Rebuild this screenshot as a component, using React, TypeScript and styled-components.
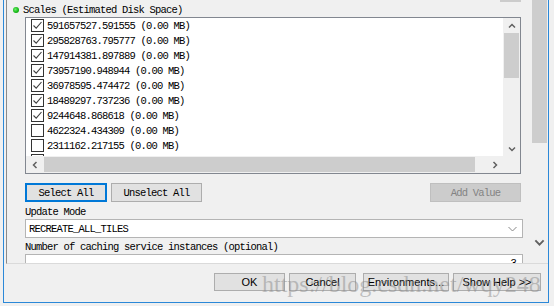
import styled, { createGlobalStyle } from "styled-components";

const mono = `"Liberation Mono", "DejaVu Sans Mono", monospace`;
const sans = `"Liberation Sans", Arial, sans-serif`;

const scales = [
    { value: "591657527.591555", checked: true },
    { value: "295828763.795777", checked: true },
    { value: "147914381.897889", checked: true },
    { value: "73957190.948944", checked: true },
    { value: "36978595.474472", checked: true },
    { value: "18489297.737236", checked: true },
    { value: "9244648.868618", checked: true },
    { value: "4622324.434309", checked: false },
    { value: "2311162.217155", checked: false },
    { value: "1155581.108577", checked: false },
    { value: "577790.554289", checked: false },
];

const GlobalStyle = createGlobalStyle`
html, body {
    margin: 0;
    padding: 0;
    background: #f0f0f0;
}
* {
    box-sizing: border-box;
}
`;

const Page = styled.div`
background: #f0f0f0;
display: flex;
height: 306px;
overflow: hidden;
padding-left: 3px;
width: 554px;
`;

const Window = styled.div`
border-bottom: 1px solid #2b88d8;
border-left: 1px solid #2b88d8;
border-right: 1px solid #2b88d8;
display: flex;
flex-direction: column;
flex-shrink: 0;
height: 303px;
position: relative;
width: 546px;
`;

const ParamsFrame = styled.div`
border-bottom: 1px solid #dadada;
border-left: 1px solid #8a8a8a;
display: flex;
flex-shrink: 0;
height: 264px;
margin-left: 2px;
overflow: hidden;
`;

const ParamsPane = styled.div`
display: flex;
flex: 1;
flex-direction: column;
min-height: 0;
padding: 0 10px 0 18px;

& > * {
    flex-shrink: 0;
}
`;

const TopStub = styled.div`
align-self: flex-end;
background: #cccccc;
height: 2px;
width: 21px;
`;

const SectionHeader = styled.div`
align-items: center;
display: flex;
font-family: ${mono};
font-size: 10.5px;
height: 15px;
letter-spacing: -0.8px;
margin-left: -12px;
white-space: nowrap;
`;

const StatusDot = styled.span`
background: radial-gradient(circle at 40% 40%, #6af06a 0%, #13b513 60%, #0c8a0c 100%);
border-radius: 50%;
display: inline-block;
height: 6px;
margin-right: 4px;
width: 6px;
`;

const ListBox = styled.div`
background: #ffffff;
border: 1px solid #828790;
display: grid;
grid-template-columns: 1fr 17px;
grid-template-rows: 138px 17px;
height: 157px;
`;

const RowsArea = styled.div`
overflow: hidden;
`;

const ScaleRow = styled.div`
align-items: center;
display: flex;
font-family: ${mono};
font-size: 10.5px;
height: 15px;
letter-spacing: -0.8px;
padding-left: 5px;
white-space: nowrap;
`;

const CheckBox = styled.span`
align-items: center;
background: #ffffff;
border: 1px solid #333333;
display: inline-flex;
flex-shrink: 0;
height: 13px;
justify-content: center;
margin-right: 3px;
width: 13px;
`;

const VScroll = styled.div`
background: #f0f0f0;
display: flex;
flex-direction: column;
`;

const HScroll = styled.div`
background: #f0f0f0;
display: flex;
`;

const Corner = styled.div`
background: #f0f0f0;
`;

const ArrowCell = styled.div<{ $long?: boolean }>`
align-items: center;
display: flex;
flex-shrink: 0;
height: ${(p) => (p.$long ? "17px" : "15px")};
justify-content: center;
width: 17px;
`;

const Thumb = styled.div<{ $size: number; $horizontal?: boolean }>`
background: #cdcdcd;
flex-shrink: 0;
${(p) =>
    p.$horizontal
        ? `width: ${p.$size}px; margin: 1px 0 1px 1px;`
        : `height: ${p.$size}px; margin: 0 1px;`}
`;

const Track = styled.div`
flex: 1;
`;

const ButtonRow = styled.div`
display: flex;
justify-content: space-between;
margin-top: 9px;
`;

const ButtonGroup = styled.div`
display: flex;
gap: 4px;
`;

const DlgButton = styled.button<{ $width: number; $focused?: boolean }>`
background: ${(p) => (p.disabled ? "#cccccc" : "#e1e1e1")};
border: 1px solid ${(p) => (p.$focused ? "#0078d7" : p.disabled ? "#bfbfbf" : "#adadad")};
box-shadow: ${(p) => (p.$focused ? "inset 0 0 0 1px #0078d7" : "none")};
color: ${(p) => (p.disabled ? "#838383" : "#000000")};
font-family: ${mono};
font-size: 10.5px;
height: 19px;
letter-spacing: -0.8px;
padding: 0;
width: ${(p) => p.$width}px;
`;

const FieldLabel = styled.div<{ $gap: number }>`
font-family: ${mono};
font-size: 10.5px;
height: 14px;
letter-spacing: -0.8px;
line-height: 14px;
margin-top: ${(p) => p.$gap}px;
white-space: nowrap;
`;

const ComboBox = styled.div`
align-items: center;
background: #ffffff;
border: 1px solid #b4b4b4;
display: flex;
font-family: ${mono};
font-size: 10.5px;
height: 19px;
justify-content: space-between;
letter-spacing: -0.8px;
margin-right: -2px;
padding: 0 5px 0 3px;
`;

const TextBox = styled.div`
background: #ffffff;
border: 1px solid #b4b4b4;
font-family: ${mono};
font-size: 10.5px;
height: 19px;
letter-spacing: -0.8px;
line-height: 17px;
margin-right: -2px;
padding-right: 6px;
text-align: right;
`;

const OuterScroll = styled.div`
display: flex;
flex-direction: column;
flex-shrink: 0;
width: 17px;
`;

const OuterThumb = styled.div`
background: #cdcdcd;
height: 143px;
margin: 0 1px;
`;

const OuterArrow = styled.div`
align-items: center;
display: flex;
height: 17px;
justify-content: center;
margin-bottom: 12px;
`;

const ButtonBar = styled.div`
display: flex;
flex: 1;
gap: 4px;
justify-content: flex-end;
padding: 9px 7px 0 0;
`;

const BarButton = styled.button<{ $width: number; $space?: number }>`
background: #e1e1e1;
border: 1px solid #adadad;
color: #000000;
font-family: ${sans};
font-size: 11px;
height: 18px;
margin-left: ${(p) => p.$space ?? 0}px;
padding: 0;
width: ${(p) => p.$width}px;
`;

const Watermark = styled.div`
color: rgba(140, 140, 140, 0.5);
font-family: "Liberation Serif", "Times New Roman", serif;
font-size: 24px;
left: 258px;
line-height: 24px;
pointer-events: none;
position: absolute;
top: 272px;
white-space: nowrap;
`;

const Chevron = ({ dir, bold }: { dir: "up" | "down" | "left" | "right"; bold?: boolean }) => {
    const rot = { up: 0, right: 90, down: 180, left: 270 }[dir];
    const w = bold ? 11 : 8;
    return (
        <svg width={w} height={w} viewBox="0 0 8 8">
            <path
                d="M1 5.5 L4 2.5 L7 5.5"
                fill="none"
                stroke="#606060"
                strokeWidth={bold ? 1.4 : 1.5}
                transform={`rotate(${rot} 4 4)`}
            />
        </svg>
    );
};

const CheckMark = () => (
    <svg width="11" height="11" viewBox="0 0 11 11">
        <path d="M1.5 5.5 L4.2 8.2 L9.5 2" fill="none" stroke="#404040" strokeWidth="1.1" />
    </svg>
);

const App = () => {
    return (
        <Page>
            <GlobalStyle />
            <Window>
                <ParamsFrame>
                    <ParamsPane>
                        <TopStub />
                        <SectionHeader>
                            <StatusDot />
                            Scales (Estimated Disk Space)
                        </SectionHeader>
                        <ListBox>
                            <RowsArea>
                                {scales.map((s) => (
                                    <ScaleRow key={s.value}>
                                        <CheckBox>{s.checked && <CheckMark />}</CheckBox>
                                        {s.value} (0.00 MB)
                                    </ScaleRow>
                                ))}
                            </RowsArea>
                            <VScroll>
                                <ArrowCell>
                                    <Chevron dir="up" />
                                </ArrowCell>
                                <Thumb $size={45} />
                                <Track />
                                <ArrowCell>
                                    <Chevron dir="down" />
                                </ArrowCell>
                            </VScroll>
                            <HScroll>
                                <ArrowCell $long>
                                    <Chevron dir="left" />
                                </ArrowCell>
                                <Thumb $size={431} $horizontal />
                                <Track />
                                <ArrowCell $long>
                                    <Chevron dir="right" />
                                </ArrowCell>
                            </HScroll>
                            <Corner />
                        </ListBox>
                        <ButtonRow>
                            <ButtonGroup>
                                <DlgButton $width={82} $focused>Select All</DlgButton>
                                <DlgButton $width={91}>Unselect All</DlgButton>
                            </ButtonGroup>
                            <DlgButton $width={91} disabled>Add Value</DlgButton>
                        </ButtonRow>
                        <FieldLabel $gap={3}>Update Mode</FieldLabel>
                        <ComboBox>
                            RECREATE_ALL_TILES
                            <svg width="9" height="6" viewBox="0 0 9 6">
                                <path d="M0.5 1 L4.5 5 L8.5 1" fill="none" stroke="#888888" strokeWidth="1" />
                            </svg>
                        </ComboBox>
                        <FieldLabel $gap={2}>Number of caching service instances (optional)</FieldLabel>
                        <TextBox>3</TextBox>
                    </ParamsPane>
                    <OuterScroll>
                        <OuterThumb />
                        <Track />
                        <OuterArrow>
                            <Chevron dir="down" bold />
                        </OuterArrow>
                    </OuterScroll>
                </ParamsFrame>
                <ButtonBar>
                    <BarButton $width={71}>OK</BarButton>
                    <BarButton $width={67}>Cancel</BarButton>
                    <BarButton $width={86} $space={3}>Environments...</BarButton>
                    <BarButton $width={88}>Show Help &gt;&gt;</BarButton>
                </ButtonBar>
                <Watermark>https://blog.csdn.net/wqy248</Watermark>
            </Window>
        </Page>
    );
};

export default App;
